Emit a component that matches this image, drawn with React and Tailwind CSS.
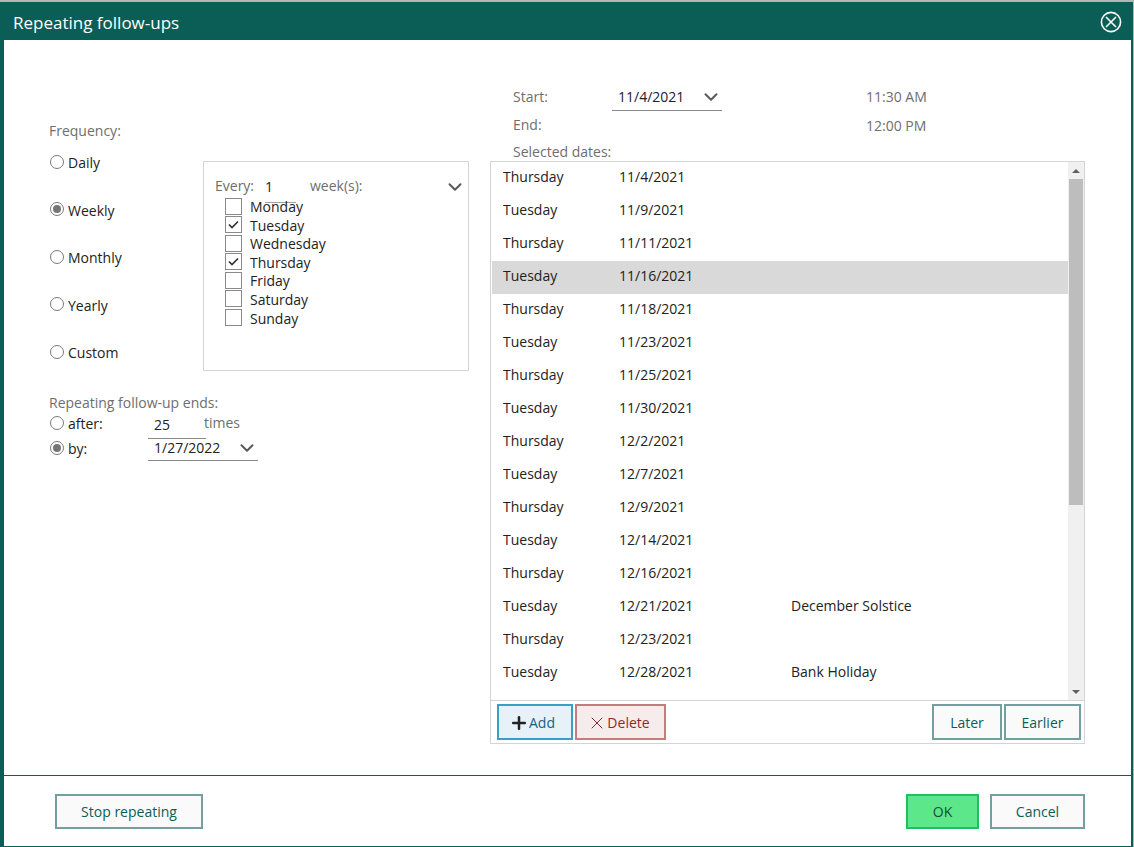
import { ChevronDown, Plus, X } from "lucide-react";

const dates = [
  ["Thursday", "11/4/2021"],
  ["Tuesday", "11/9/2021"],
  ["Thursday", "11/11/2021"],
  ["Tuesday", "11/16/2021", "", true],
  ["Thursday", "11/18/2021"],
  ["Tuesday", "11/23/2021"],
  ["Thursday", "11/25/2021"],
  ["Tuesday", "11/30/2021"],
  ["Thursday", "12/2/2021"],
  ["Tuesday", "12/7/2021"],
  ["Thursday", "12/9/2021"],
  ["Tuesday", "12/14/2021"],
  ["Thursday", "12/16/2021"],
  ["Tuesday", "12/21/2021", "December Solstice"],
  ["Thursday", "12/23/2021"],
  ["Tuesday", "12/28/2021", "Bank Holiday"],
];

const days = [
  ["Monday", false],
  ["Tuesday", true],
  ["Wednesday", false],
  ["Thursday", true],
  ["Friday", false],
  ["Saturday", false],
  ["Sunday", false],
];

function Radio({ checked }) {
  return (
    <span className="w-[14px] h-[14px] -mt-[3px] shrink-0 rounded-full border border-[#7a7a7a] bg-white flex items-center justify-center">
      {checked && <span className="w-[8px] h-[8px] rounded-full bg-[#767676]" />}
    </span>
  );
}

function Chevron() {
  return <ChevronDown className="w-[22px] h-[22px] shrink-0 text-[#5a5a5a]" strokeWidth={2.2} />;
}

function Button({ className, children }) {
  return (
    <button className={`border-2 flex items-center justify-center ${className}`}>
      {children}
    </button>
  );
}

const neutral = "border-[#73a09f] bg-[#fafafa] text-[#0b5e58]";

export default function App() {
  return (
    <div className="w-[1134px] h-[847px] bg-[#b5b5b5] pt-[2px] pr-px text-[14px] leading-5 text-[#222] font-['Open_Sans','Noto_Sans',sans-serif] overflow-hidden">
      <div className="h-[845px] bg-white border-l-[4px] border-r-[2px] border-b border-[#0a5e56] flex flex-col">
        {/* Title bar */}
        <div className="h-[38px] shrink-0 bg-[#0a5e56] flex items-center justify-between pl-[9px] pr-[9px] text-white text-[17px]">
          <span className="pt-[4px]">Repeating follow-ups</span>
          <svg className="mt-[2px]" width="22" height="22" viewBox="0 0 22 22" fill="none" stroke="white" strokeWidth="1.6">
            <circle cx="11" cy="11" r="9.6" />
            <path d="M6 6 L16 16 M16 6 L6 16" />
          </svg>
        </div>

        <div className="h-[736px] flex border-b border-[#0a5e56]">
          {/* Left side */}
          <div className="w-[486px] pl-[45px] pt-[81px]">
            <div className="text-[#6e6e6e]">Frequency:</div>
            <div className="flex mt-[12px]">
              <div className="w-[154px] flex flex-col gap-[27.5px]">
                {["Daily", "Weekly", "Monthly", "Yearly", "Custom"].map((f) => (
                  <label key={f} className="flex items-center gap-[4px] h-5 pl-px">
                    <Radio checked={f === "Weekly"} />
                    <span>{f}</span>
                  </label>
                ))}
              </div>
              <div className="w-[266px] h-[210px] mt-[8px] border border-[#d4d4d4] pl-[11px] pr-[2px] pt-[14px]">
                <div className="flex items-start h-5 text-[#6e6e6e]">
                  <span className="w-[50px]">Every:</span>
                  <span className="w-[31px] h-[27px] mr-[14px] pt-px border-b border-[#a0a0a0] text-[#222]">1</span>
                  <span className="flex-1">week(s):</span>
                  <Chevron />
                </div>
                <div className="flex flex-col gap-[0.6px] pl-[10px] mt-px">
                  {days.map(([d, on]) => (
                    <label key={d} className="flex items-center gap-[8px] h-[18px]">
                      <span className="w-[17px] h-[17px] border border-[#8a8a8a] bg-white flex items-center justify-center">
                        {on && (
                          <svg width="13" height="13" viewBox="0 0 13 13" fill="none" stroke="#333" strokeWidth="1.7">
                            <path d="M2 6.5 L5 9.5 L11 3.5" />
                          </svg>
                        )}
                      </span>
                      <span className="pt-[2px]">{d}</span>
                    </label>
                  ))}
                </div>
              </div>
            </div>

            <div className="mt-[22px] text-[#6e6e6e]">Repeating follow-up ends:</div>
            <div className="flex items-start h-[26px]">
              <label className="w-[99px] h-5 mt-px flex items-center gap-[4px] pl-px">
                <Radio />
                <span>after:</span>
              </label>
              <span className="w-[58px] h-[26px] pl-[6px] pt-[2px] border-b border-[#8a8a8a]">25</span>
              <span className="ml-[-2px] text-[#6e6e6e]">times</span>
            </div>
            <div className="flex items-start h-[22px]">
              <label className="w-[99px] h-5 flex items-center gap-[4px] pl-px">
                <Radio checked />
                <span>by:</span>
              </label>
              <span className="w-[110px] h-[22px] pl-[6px] pb-[4px] border-b border-[#8a8a8a] flex items-center justify-between">
                1/27/2022
                <Chevron />
              </span>
            </div>
          </div>

          {/* Right side */}
          <div className="w-[595px] pt-[43px]">
            <div className="flex items-center h-[28px] pl-[23px]">
              <span className="w-[99px] text-[#6e6e6e]">Start:</span>
              <span className="w-[110px] h-[28px] pl-[6px] border-b border-[#8a8a8a] flex items-center justify-between">
                11/4/2021
                <Chevron />
              </span>
              <span className="ml-[144px] text-[#6e6e6e]">11:30 AM</span>
            </div>
            <div className="flex items-center h-5 mt-[5px] pl-[23px]">
              <span className="w-[353px] -mt-[2px] text-[#6e6e6e]">End:</span>
              <span className="text-[#6e6e6e]">12:00 PM</span>
            </div>
            <div className="h-[19px] mt-[6px] pl-[23px] text-[#6e6e6e]">Selected dates:</div>

            <div className="h-[583px] border border-[#d4d4d4] flex flex-col">
              <div className="h-[539px] flex border-b border-[#d4d4d4]">
                <div className="flex-1 pl-px overflow-hidden">
                  {dates.map(([day, date, note, sel]) => (
                    <div key={date} className={`h-[33px] flex items-center pl-[11px] pb-[4px] ${sel ? "bg-[#d9d9d9]" : ""}`}>
                      <span className="w-[116px]">{day}</span>
                      <span className="w-[172px]">{date}</span>
                      <span>{note}</span>
                    </div>
                  ))}
                </div>
                {/* Scrollbar */}
                <div className="w-[16px] shrink-0 bg-[#f0f0f0] flex flex-col items-center">
                  <div className="h-[17px] flex items-center justify-center">
                    <span className="w-0 h-0 border-x-[4px] border-x-transparent border-b-[4px] border-b-[#606060]" />
                  </div>
                  <div className="w-[14px] h-[326px] bg-[#bdbdbd]" />
                  <div className="flex-1" />
                  <div className="h-[17px] flex items-center justify-center">
                    <span className="w-0 h-0 border-x-[4px] border-x-transparent border-t-[4px] border-t-[#606060]" />
                  </div>
                </div>
              </div>
              <div className="flex-1 flex items-center gap-[2px] pl-[6px] pr-[3px]">
                <Button className="w-[76px] h-[36px] pt-[2px] pr-[6px] border-[#3a9fc4] bg-[#e6f1f8] text-[#17607e]">
                  <Plus className="w-[20px] h-[20px] text-[#222]" strokeWidth={3} />
                  Add
                </Button>
                <Button className="w-[91px] h-[36px] pt-[2px] pr-[4px] border-[#c47d7d] bg-[#f7ecec] text-[#8b2a2a]">
                  <X className="w-[20px] h-[20px]" strokeWidth={1.2} />
                  Delete
                </Button>
                <div className="flex-1" />
                <Button className={`w-[70px] h-[36px] pt-[2px] ${neutral}`}>Later</Button>
                <Button className={`w-[77px] h-[36px] pt-[2px] ${neutral}`}>Earlier</Button>
              </div>
            </div>
          </div>
        </div>

        {/* Footer */}
        <div className="flex-1 flex items-start pt-[18px] pl-[51px]">
          <Button className={`w-[148px] h-[35px] ${neutral}`}>Stop repeating</Button>
          <div className="flex-1" />
          <Button className="w-[73px] h-[35px] border-[#22c05a] bg-[#5ce88a] text-[#1e4a38]">OK</Button>
          <Button className={`w-[95px] h-[35px] ml-[11px] mr-[46px] ${neutral}`}>Cancel</Button>
        </div>
      </div>
    </div>
  );
}
